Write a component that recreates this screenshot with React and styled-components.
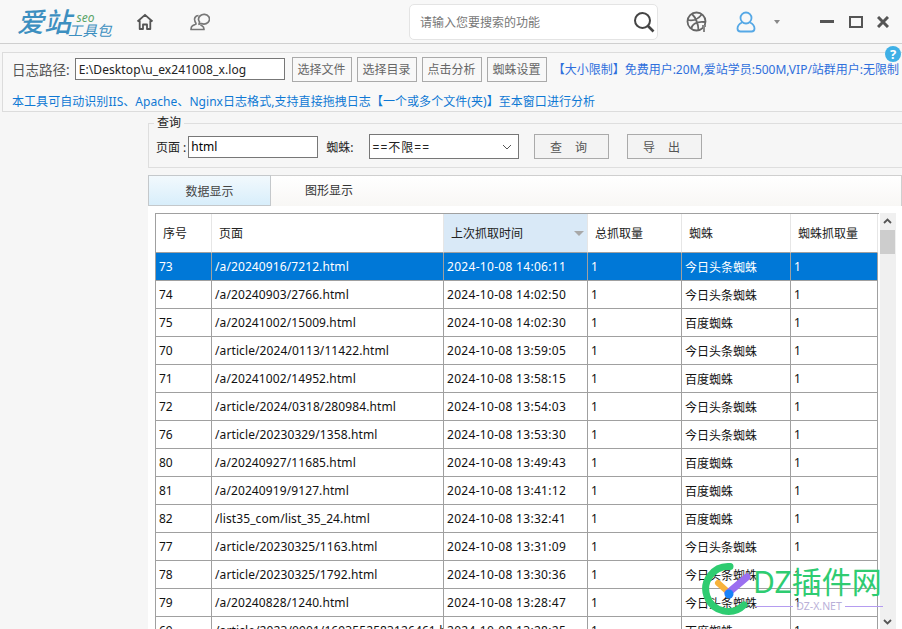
import React from 'react';
import styled, { createGlobalStyle } from 'styled-components';

const GlobalStyle = createGlobalStyle`
  html, body { margin: 0; padding: 0; height: 100%; overflow: hidden; }
  body {
    background: #f6f6f6;
    color: #222;
    font-family: "Noto Sans", "Noto Sans CJK SC", sans-serif;
    font-size: 12px;
  }
`;

const Page = styled.div`
  position: relative;
  width: 902px;
  height: 629px;
  overflow: hidden;
  display: flex;
  flex-direction: column;
`;

const Header = styled.header`
  flex: none;
  height: 44px;
  display: flex;
  align-items: center;
  background: #f8f8f8;
  border-bottom: 1px solid #cfcfcf;
  box-sizing: border-box;
`;

const Logo = styled.div`
  width: 126px;
  padding-left: 17px;
  display: flex;
  align-items: flex-end;
  font-style: italic;
  color: #3c8fc0;
  box-sizing: border-box;
`;

const LogoMain = styled.span`
  font-size: 27px;
  line-height: 32px;
  font-weight: 500;
`;

const LogoSide = styled.span`
  display: flex;
  flex-direction: column;
  align-items: flex-end;
  font-size: 14.500px;
  line-height: 15px;
  margin-left: -3px;
  white-space: nowrap;
`;

const LogoSeo = styled.span`
  color: #5aa469;
  font-size: 12px;
  line-height: 10px;
  margin-right: 17px;
`;

const NavButton = styled.button`
  flex: none;
  width: ${(p) => p.$w || 38}px;
  height: 40px;
  margin-right: ${(p) => p.$gap || 0}px;
  padding: 0;
  border: 0;
  background: none;
  display: flex;
  align-items: center;
  justify-content: center;
`;

const SearchBox = styled.div`
  flex: none;
  width: 249px;
  height: 36px;
  margin-left: 190px;
  margin-right: 27px;
  box-sizing: border-box;
  padding: 0 2px 0 10px;
  display: flex;
  align-items: center;
  justify-content: space-between;
  background: #fff;
  border: 1px solid #e4e4e4;
  border-radius: 5px;
  color: #777;
`;

const ToolPanel = styled.section`
  flex: none;
  position: relative;
  height: 60px;
  margin: 8px 0 0 2px;
  box-sizing: border-box;
  padding: 3px 0 0 9px;
  background: #f8f8f8;
  border: 1px solid #dcdcdc;
  border-right: 0;
`;

const PathRow = styled.div`
  display: flex;
  align-items: center;
  height: 26px;
  white-space: nowrap;
  font-size: 13.500px;
  color: #555;
`;

const PathInput = styled.input`
  flex: none;
  width: 210px;
  height: 22px;
  margin: 0 7px 0 5px;
  padding: 0 3px;
  box-sizing: border-box;
  border: 1px solid #777;
  background: #fff;
  color: #222;
  letter-spacing: 0.100px;
  font: 12px "Noto Sans", "Noto Sans CJK SC", sans-serif;
`;

const ToolButton = styled.button`
  flex: none;
  height: 25px;
  width: 60px;
  margin-right: 5px;
  padding: 0;
  border: 1px solid #aaa;
  background: #f8f8f8;
  color: #666;
  font: 12px "Noto Sans", "Noto Sans CJK SC", sans-serif;
`;

const LimitNote = styled.span`
  margin-left: 1px;
  font-size: 12px;
  color: #2f6fdc;
`;

const HintRow = styled.div`
  margin-top: 11px;
  font-size: 12px;
  line-height: 18px;
  letter-spacing: 0.050px;
  color: #0f78d4;
  white-space: nowrap;
`;

const HelpBadge = styled.span`
  position: absolute;
  right: 1px;
  top: -7px;
  width: 16px;
  height: 16px;
  border-radius: 50%;
  background: #3fb0e6;
  color: #fff;
  font-size: 13px;
  font-weight: 700;
  line-height: 16px;
  text-align: center;
`;

const Workspace = styled.main`
  flex: 1;
  min-height: 0;
  margin-left: 148px;
  display: flex;
  flex-direction: column;
`;

const QueryGroup = styled.fieldset`
  flex: none;
  height: 52px;
  margin: 4px 0 0 0;
  padding: 0 0 0 7px;
  box-sizing: border-box;
  border: 1px solid #dedede;
  border-right: 0;
`;

const QueryLegend = styled.legend`
  padding: 0 3px;
  margin-left: -2px;
  line-height: 14px;
  font-size: 12px;
`;

const QueryRow = styled.div`
  display: flex;
  align-items: center;
  margin-top: 4px;
`;

const QueryInput = styled.input`
  flex: none;
  width: 130px;
  height: 22px;
  margin: 0 8px 0 2px;
  padding: 0 2px;
  box-sizing: border-box;
  border: 1px solid #777;
  font: 12px "Noto Sans", "Noto Sans CJK SC", sans-serif;
`;

const QueryLabel = styled.span`
  margin-right: 7px;
`;

const SelectBox = styled.div`
  flex: none;
  width: 150px;
  height: 25px;
  margin: 0 15px 0 8px;
  box-sizing: border-box;
  padding: 0 6px 0 3px;
  display: flex;
  align-items: center;
  justify-content: space-between;
  border: 1px solid #777;
  background: #fff;
  letter-spacing: 1px;
`;

const QueryButton = styled.button`
  flex: none;
  width: 75px;
  height: 25px;
  margin-right: 18px;
  padding: 0;
  border: 1px solid #aaa;
  background: #f3f3f3;
  color: #555;
  font: 12px "Noto Sans", "Noto Sans CJK SC", sans-serif;
  letter-spacing: 5px;
`;

const Tabs = styled.div`
  flex: none;
  height: 31px;
  margin-top: 7px;
  display: flex;
  background: linear-gradient(#ffffff, #f8f7f5);
  border-top: 1px solid #cfcfcf;
  border-right: 1px solid #cfcfcf;
  box-sizing: border-box;
`;

const Tab = styled.div`
  flex: none;
  width: ${(p) => (p.$active ? 123 : 116)}px;
  height: ${(p) => (p.$active ? 31 : 30)}px;
  margin-top: -1px;
  box-sizing: border-box;
  display: flex;
  align-items: center;
  justify-content: center;
  color: ${(p) => (p.$active ? '#444' : '#333')};
  ${(p) =>
    p.$active &&
    'background: linear-gradient(#f2f9fd, #d8eefb); border: 1px solid #c4c8cb;'}
`;

const TableWrap = styled.div`
  flex: 1;
  min-height: 0;
  display: flex;
  background: #fff;
  padding: 7px 0 0 7px;
`;

const Grid = styled.div`
  flex: none;
  width: 724px;
  border-top: 1px solid #a0a0a0;
  border-left: 1px solid #a0a0a0;
  box-sizing: border-box;
`;

const Columns = styled.div`
  display: grid;
  grid-template-columns: 56px 232px 144px 94px 109px 87px;
`;

const HeadCell = styled.div`
  height: 39px;
  padding-left: 7px;
  box-sizing: border-box;
  position: relative;
  display: flex;
  align-items: center;
  border-right: 1px solid #e6e6e6;
  border-bottom: 1px solid #a0a0a0;
  background: ${(p) => (p.$sorted ? '#d9e9f7' : '#fff')};
  color: #222;
`;

const SortMark = styled.span`
  position: absolute;
  right: 3px;
  top: 17px;
  border-left: 5px solid transparent;
  border-right: 5px solid transparent;
  border-top: 5px solid #a8a8a8;
`;

const Cell = styled.div`
  height: 28px;
  padding-left: 3px;
  box-sizing: border-box;
  overflow: hidden;
  display: flex;
  align-items: center;
  white-space: nowrap;
  border-right: 1px solid #a0a0a0;
  border-bottom: 1px solid #a0a0a0;
  letter-spacing: ${(p) => p.$spacing || 0}px;
  background: ${(p) => (p.$selected ? '#0078d7' : '#fff')};
  color: ${(p) => (p.$selected ? '#fff' : '#111')};
`;

const ScrollBar = styled.div`
  flex: none;
  width: 16px;
  margin-left: 1px;
  background: #f0f0f0;
  position: relative;
`;

const ScrollThumb = styled.div`
  position: absolute;
  top: 17px;
  left: 0;
  width: 15px;
  height: 24px;
  background: #cdcdcd;
`;

const ArrowGlyph = styled.svg`
  position: absolute;
  left: 3px;
  top: ${(p) => p.$top}px;
`;

const Watermark = styled.div`
  position: absolute;
  left: 701px;
  top: 562px;
  width: 186px;
  height: 54px;
  pointer-events: none;
`;

const WatermarkName = styled.span`
  position: absolute;
  left: 52px;
  top: 2px;
  font-size: 30px;
  line-height: 36px;
  color: #2ecc71;
  white-space: nowrap;
`;

const WatermarkUrl = styled.span`
  position: absolute;
  left: 54px;
  top: 38px;
  width: 128px;
  display: flex;
  align-items: center;
  gap: 3px;
  font-size: 10.500px;
  line-height: 12px;
  color: #b9b0d8;
  &::before, &::after {
    content: '';
    flex: 1;
    height: 1px;
    background: #b59cf0;
  }
`;

const rows = [
  ['73', '/a/20240916/7212.html', '2024-10-08 14:06:11', '今日头条蜘蛛'],
  ['74', '/a/20240903/2766.html', '2024-10-08 14:02:50', '今日头条蜘蛛'],
  ['75', '/a/20241002/15009.html', '2024-10-08 14:02:30', '百度蜘蛛'],
  ['70', '/article/2024/0113/11422.html', '2024-10-08 13:59:05', '今日头条蜘蛛'],
  ['71', '/a/20241002/14952.html', '2024-10-08 13:58:15', '百度蜘蛛'],
  ['72', '/article/2024/0318/280984.html', '2024-10-08 13:54:03', '今日头条蜘蛛'],
  ['76', '/article/20230329/1358.html', '2024-10-08 13:53:30', '今日头条蜘蛛'],
  ['80', '/a/20240927/11685.html', '2024-10-08 13:49:43', '百度蜘蛛'],
  ['81', '/a/20240919/9127.html', '2024-10-08 13:41:12', '百度蜘蛛'],
  ['82', '/list35_com/list_35_24.html', '2024-10-08 13:32:41', '百度蜘蛛'],
  ['77', '/article/20230325/1163.html', '2024-10-08 13:31:09', '今日头条蜘蛛'],
  ['78', '/article/20230325/1792.html', '2024-10-08 13:30:36', '今日头条蜘蛛'],
  ['79', '/a/20240828/1240.html', '2024-10-08 13:28:47', '今日头条蜘蛛'],
  ['69', '/article/2023/0901/1693552583126461.html', '2024-10-08 13:28:25', '百度蜘蛛'],
];

const heads = ['序号', '页面', '上次抓取时间', '总抓取量', '蜘蛛', '蜘蛛抓取量'];

const App = () => (
  <Page>
    <GlobalStyle />
    <Header>
      <Logo>
        <LogoMain>爱站</LogoMain>
        <LogoSide>
          <LogoSeo>seo</LogoSeo>
          工具包
        </LogoSide>
      </Logo>
      <NavButton $w={38} $gap={17}>
        <svg width="18" height="18" viewBox="0 0 18 18" fill="none" stroke="#555" strokeWidth="1.800" strokeLinejoin="round">
          <path d="M1.500 8.500 9 1.800l7.500 6.700M3.700 7.500V16h3.300v-4.500h4V16h3.300V7.500" />
        </svg>
      </NavButton>
      <NavButton $w={38}>
        <svg width="20" height="19" viewBox="0 0 20 19" fill="none" stroke="#777" strokeWidth="1.700" strokeLinejoin="round">
          <path d="M8.500 7.500a5.500 4.800 0 1 1 3 4l-2.500.8.600-2.300a4.500 4.500 0 0 1-1.100-2.500z" />
          <path d="M8.500 3.500a4 4 0 0 0-3.500 6c.3 1 1 1.500 1 2.500L2.500 13.800c-1 .6-1.500 1.700-1.500 3.700h13c0-2-.8-3.100-2-3.700l-1.500-.8" />
        </svg>
      </NavButton>
      <SearchBox>
        请输入您要搜索的功能
        <svg width="22" height="22" viewBox="0 0 22 22" fill="none" stroke="#444" strokeWidth="2">
          <circle cx="9.500" cy="9.500" r="7.500" />
          <path d="m15 15 5.500 5.500" strokeWidth="2.600" />
        </svg>
      </SearchBox>
      <NavButton $w={24} $gap={25}>
        <svg width="22" height="22" viewBox="0 0 22 22" fill="none" stroke="#666" strokeWidth="1.800">
          <circle cx="10.500" cy="10.500" r="9" />
          <path d="M6 3c3 3 6 8 6.500 16M2 9c4 1 10 0 14-6M5 18c1-5 6-8 14-7" />
          <path d="M18 14v7M16 15h4" stroke="#888" strokeWidth="2" />
        </svg>
      </NavButton>
      <NavButton $w={24} $gap={11}>
        <svg width="20" height="22" viewBox="0 0 20 22" fill="none" stroke="#55a8e6" strokeWidth="1.800">
          <circle cx="10" cy="7" r="5.500" />
          <path d="M6 11.500c-3 1.500-4.500 3.500-4.500 6 0 2 1.500 3 3 3h11c1.500 0 3-1 3-3 0-2.500-1.500-4.500-4.500-6" />
        </svg>
      </NavButton>
      <NavButton $w={16} $gap={35}>
        <svg width="6" height="4" viewBox="0 0 6 4"><path d="M0 0h6L3 4z" fill="#888" /></svg>
      </NavButton>
      <NavButton $w={14} $gap={15}>
        <svg width="14" height="3" viewBox="0 0 14 3"><rect width="14" height="3" fill="#555" /></svg>
      </NavButton>
      <NavButton $w={14} $gap={14}>
        <svg width="14" height="12" viewBox="0 0 14 12" fill="none" stroke="#555" strokeWidth="2"><rect x="1" y="1" width="12" height="10" /></svg>
      </NavButton>
      <NavButton $w={12}>
        <svg width="12" height="12" viewBox="0 0 12 12" stroke="#555" strokeWidth="3"><path d="m1 1 10 10M11 1 1 11" /></svg>
      </NavButton>
    </Header>

    <ToolPanel>
      <HelpBadge>?</HelpBadge>
      <PathRow>
        日志路径:
        <PathInput defaultValue="E:\Desktop\u_ex241008_x.log" />
        <ToolButton>选择文件</ToolButton>
        <ToolButton>选择目录</ToolButton>
        <ToolButton>点击分析</ToolButton>
        <ToolButton>蜘蛛设置</ToolButton>
        <LimitNote>【大小限制】免费用户:20M,爱站学员:500M,VIP/站群用户:无限制</LimitNote>
      </PathRow>
      <HintRow>本工具可自动识别IIS、Apache、Nginx日志格式,支持直接拖拽日志【一个或多个文件(夹)】至本窗口进行分析</HintRow>
    </ToolPanel>

    <Workspace>
      <QueryGroup>
        <QueryLegend>查询</QueryLegend>
        <QueryRow>
          页面 :
          <QueryInput defaultValue="html" />
          <QueryLabel>蜘蛛:</QueryLabel>
          <SelectBox>
            ==不限==
            <svg width="10" height="6" viewBox="0 0 10 6" fill="none" stroke="#555"><path d="m1 1 4 4 4-4" /></svg>
          </SelectBox>
          <QueryButton>查 询</QueryButton>
          <QueryButton>导 出</QueryButton>
        </QueryRow>
      </QueryGroup>

      <Tabs>
        <Tab $active>数据显示</Tab>
        <Tab>图形显示</Tab>
      </Tabs>

      <TableWrap>
        <Grid>
          <Columns>
            {heads.map((h, i) => (
              <HeadCell key={h} $sorted={i === 2}>
                {h}
                {i === 2 && <SortMark />}
              </HeadCell>
            ))}
            {rows.map((r, i) => (
              <React.Fragment key={r[0]}>
                <Cell $selected={i === 0}>{r[0]}</Cell>
                <Cell $selected={i === 0} $spacing={0.100}>{r[1]}</Cell>
                <Cell $selected={i === 0} $spacing={0.300}>{r[2]}</Cell>
                <Cell $selected={i === 0}>1</Cell>
                <Cell $selected={i === 0}>{r[3]}</Cell>
                <Cell $selected={i === 0}>1</Cell>
              </React.Fragment>
            ))}
          </Columns>
        </Grid>
        <ScrollBar>
          <ArrowGlyph $top={5} width="9" height="6" viewBox="0 0 9 6" fill="none" stroke="#555" strokeWidth="1.800"><path d="m1 5 3.500-3.500L8 5" /></ArrowGlyph>
          <ScrollThumb />
          <ArrowGlyph $top={406} width="9" height="6" viewBox="0 0 9 6" fill="none" stroke="#555" strokeWidth="1.800"><path d="m1 1 3.500 3.500L8 1" /></ArrowGlyph>
        </ScrollBar>
      </TableWrap>
    </Workspace>

    <Watermark>
      <svg width="52" height="54" viewBox="0 0 52 54" fill="none">
        <path d="M29 4.500A22.500 22.500 0 1 0 43 43" stroke="#2ecc71" strokeWidth="7" strokeLinecap="round" />
        <path d="M17 21l10 9" stroke="#f7b23b" strokeWidth="6" strokeLinecap="round" />
        <path d="M27 31 46 15" stroke="#9b6ff0" strokeWidth="7" strokeLinecap="round" />
        <circle cx="28" cy="32" r="4.500" fill="#1a82f7" />
      </svg>
      <WatermarkName>DZ插件网</WatermarkName>
      <WatermarkUrl>DZ-X.NET</WatermarkUrl>
    </Watermark>
  </Page>
);

export default App;
